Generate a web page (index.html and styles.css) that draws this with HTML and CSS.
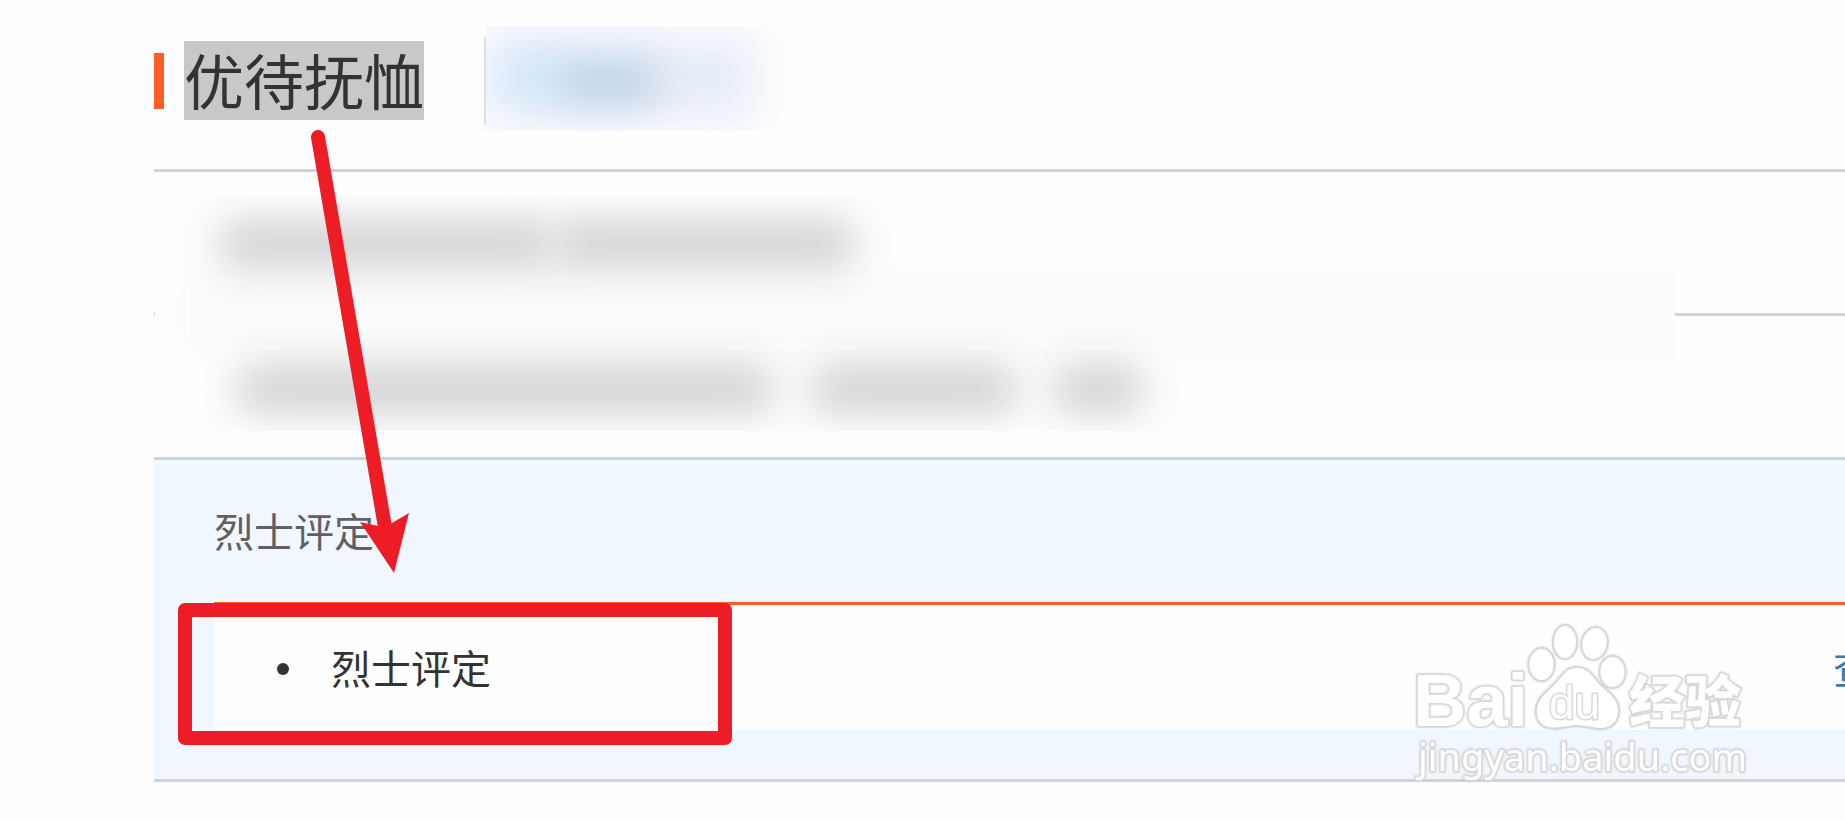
FILE: index.html
```html
<!DOCTYPE html>
<html lang="zh-CN">
<head>
<meta charset="utf-8">
<title>优待抚恤</title>
<link rel="stylesheet" href="styles.css">
</head>
<body>
<main class="page">
  <header class="head">
    <span class="head-mark"></span>
    <h1 class="head-title">优待抚恤</h1>
    <div class="head-box">
      <div class="smudge smudge-blue">
        <i class="tint tint-frame"></i>
        <i class="tint tint-sky"></i>
        <i class="tint tint-steel"></i>
      </div>
    </div>
  </header>

  <section class="rows">
    <div class="row"></div>
    <div class="row"></div>
    <div class="smudge smudge-rows">
      <i class="haze"></i>
      <i class="bar bar-a"></i>
      <i class="bar bar-b"></i>
      <i class="bar bar-c"></i>
      <i class="bar bar-d"></i>
      <i class="bar bar-e"></i>
    </div>
  </section>

  <section class="group">
    <h2 class="group-title">烈士评定</h2>
    <ul class="list">
      <li class="item"><span class="dot"></span><span>烈士评定</span><a class="item-link" href="#">查看</a></li>
    </ul>
  </section>

  <svg class="arrow" width="120" height="450" viewBox="300 125 120 450" aria-hidden="true">
    <path d="M318 137L385 527" stroke="#ee1c25" stroke-width="14" stroke-linecap="round" fill="none"/>
    <path d="M394 573L360 522L378 526L392 523L409 513Z" fill="#ee1c25"/>
  </svg>
  <div class="frame"></div>

  <svg class="mark" width="350" height="170" viewBox="1405 615 350 170" role="img" aria-label="Baidu 经验">
    <g class="mark-shape">
      <ellipse cx="1541.500" cy="664.500" rx="13" ry="16.500"/>
      <ellipse cx="1565" cy="642" rx="12" ry="17"/>
      <ellipse cx="1594.500" cy="643.500" rx="13" ry="16.500" transform="rotate(12 1594.500 643.500)"/>
      <ellipse cx="1612.500" cy="672" rx="13" ry="16"/>
      <path d="M1577 667C1589 667 1593 676 1600 684C1609 692 1619 698 1619 711C1619 723 1610 730 1598 729C1590 728 1585 726 1577 726C1568 726 1559 730 1549 728C1540 727 1535 719 1536 709C1537 698 1546 692 1553 685C1561 677 1565 667 1577 667Z"/>
    </g>
    <text class="mark-text mark-bai" x="1413" y="726">Bai</text>
    <text class="mark-text mark-du" x="1549" y="719">du</text>
    <text class="mark-text mark-cjk" x="1629" y="722">经验</text>
    <text class="mark-text mark-url" x="1418" y="771">jingyan.baidu.com</text>
  </svg>
</main>
</body>
</html>
```
FILE: styles.css
```css
* {
  box-sizing: border-box;
}

body {
  margin: 0;
  background: #fefefe;
  color: #333;
  font-family: "Noto Sans CJK SC", sans-serif;
  font-size: 40px;
}

.page {
  position: relative;
  padding: 0 0 39px 154px;
  overflow: hidden;
}

.head {
  display: flex;
  align-items: flex-start;
  padding: 26px 0 38px;
  border-bottom: 3px solid #d0d2da;
}

.head-mark {
  width: 10px;
  height: 56px;
  margin: 27px 20px 0 0;
  background: #ff5c26;
}

.head-title {
  margin: 15px 60px 0 0;
  padding-bottom: 4px;
  background: #c8c8c8;
  font-size: 60px;
  font-weight: 400;
  line-height: 75px;
}

.head-box {
  padding-left: 2px;
  background: linear-gradient(#dcdfe6, #dcdfe6) 0 11px / 2px 88px no-repeat;
}

.smudge {
  position: relative;
  overflow: hidden;
}

.smudge-blue {
  width: 330px;
  height: 105px;
  background: linear-gradient(90deg, #f9fbfe 240px, #fefefe 310px);
}

.tint,
.bar,
.haze {
  position: absolute;
  border-radius: 16px;
}

.tint-frame {
  left: 6px;
  top: 14px;
  width: 262px;
  height: 76px;
  background: #e7edf7;
  filter: blur(18px);
}

.tint-sky {
  left: 14px;
  top: 26px;
  width: 70px;
  height: 50px;
  background: #d3e9fa;
  filter: blur(18px);
}

.tint-steel {
  left: 72px;
  top: 34px;
  width: 100px;
  height: 44px;
  background: #c0d4e7;
  filter: blur(18px);
}

.rows {
  position: relative;
}

.row {
  height: 144px;
  border-bottom: 3px solid #d0d2da;
}

.smudge-rows {
  position: absolute;
  inset: 23px 170px 29px 1px;
  background: #fefefe;
}

.haze {
  left: 30px;
  top: 80px;
  right: -60px;
  height: 76px;
  background: #fbfbfb;
  filter: blur(12px);
}

.bar {
  height: 46px;
  background: #cecfcf;
  filter: blur(20px);
}

.bar-a {
  left: 64px;
  top: 26px;
  width: 334px;
}

.bar-b {
  left: 398px;
  top: 26px;
  width: 302px;
}

.bar-c {
  left: 82px;
  top: 171px;
  width: 536px;
}

.bar-d {
  left: 656px;
  top: 171px;
  width: 206px;
}

.bar-e {
  left: 898px;
  top: 171px;
  width: 90px;
}

.group {
  padding: 40px 0 49px 60px;
  background: #f0f7ff;
  border-bottom: 3px solid #d0d2da;
}

.group-title {
  margin: 0 0 42px;
  color: #5f6064;
  font-size: 40px;
  font-weight: 400;
  line-height: 60px;
}

.list {
  margin: 0;
  padding: 0;
  list-style: none;
  background: #fefefe;
  border-top: 3px solid #ff5c26;
}

.item {
  display: flex;
  align-items: center;
  width: calc(100% + 68px);
  padding: 32px 0 33px 63px;
  line-height: 60px;
}

.dot {
  width: 12px;
  height: 12px;
  margin: 4px 42px 0 0;
  border-radius: 50%;
  background: #333;
}

.item-link {
  margin-left: auto;
  color: #337ab7;
  text-decoration: none;
}

.arrow {
  position: absolute;
  left: 300px;
  top: 125px;
}

.frame {
  position: absolute;
  left: 178px;
  top: 603px;
  width: 554px;
  height: 142px;
  border: 14px solid #ee1c25;
  border-radius: 7px;
}

.mark {
  position: absolute;
  right: 90px;
  top: 615px;
  filter: drop-shadow(0 0 1px #d0d0d0);
}

.mark-shape {
  fill: #fff;
  stroke: #d8d8d8;
  stroke-width: 2px;
}

.mark-text {
  fill: #fff;
  stroke: #d8d8d8;
  stroke-width: 3px;
  stroke-linejoin: round;
  paint-order: stroke;
}

.mark-bai {
  font: 700 74px "Liberation Sans", sans-serif;
}

.mark-du {
  font: 400 46px "Liberation Sans", sans-serif;
}

.mark-cjk {
  font: 900 56px "Noto Sans CJK SC", sans-serif;
}

.mark-url {
  font: 400 38px "Noto Sans", sans-serif;
}
```
